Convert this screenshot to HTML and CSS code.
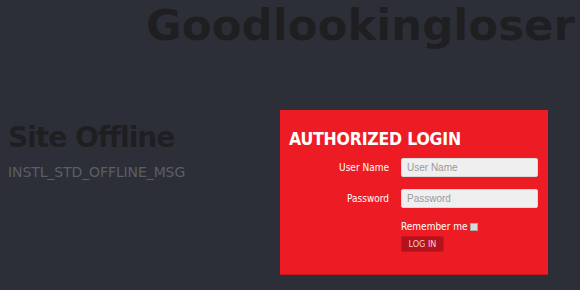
FILE: index.html
```html
<!DOCTYPE html>
<html>
<head>
  <title>Goodlookingloser - Site Offline</title>
  <link rel="stylesheet" href="styles.css">
</head>
<body>

  <h1 class="site-title">Goodlookingloser</h1>

  <div class="main">
    <div class="offline">
      <h2>Site Offline</h2>
      <p>INSTL_STD_OFFLINE_MSG</p>
    </div>

    <form class="login-box" id="loginForm">
      <h3>AUTHORIZED LOGIN</h3>
      <div class="row">
        <label for="username">User Name</label>
        <input type="text" id="username" placeholder="User Name">
      </div>
      <div class="row">
        <label for="passwd">Password</label>
        <input type="password" id="passwd" placeholder="Password">
      </div>
      <div class="row remember">
        <span></span>
        <label for="remember">Remember me <input type="checkbox" id="remember"></label>
      </div>
      <div class="row">
        <span></span>
        <div><button type="submit">LOG IN</button></div>
      </div>
    </form>
  </div>

</body>
</html>
```

FILE: styles.css
```css
body {
  margin: 0;
  background: #2c2f38;
  font-family: "DejaVu Sans", Verdana, sans-serif;
}

.site-title {
  margin: 0;
  padding: 3px 5px 0 0;
  text-align: right;
  font-size: 43.5px;
  line-height: 44px;
  color: #1f1f21;
}

.main {
  display: flex;
  align-items: flex-start;
  padding: 63px 32px 0 8px;
}

.offline h2 {
  margin: 11px 0 0;
  font-size: 28px;
  line-height: 34px;
  letter-spacing: -1px;
  color: #1f1f21;
}

.offline p {
  margin: 9px 0 0;
  font-size: 14px;
  letter-spacing: -0.1px;
  color: #5b5e66;
}

.login-box {
  margin-left: auto;
  width: 250px;
  height: 164px;
  padding: 0 9px;
  background: #ed1c24;
  border-bottom: 1px solid #c8161d;
}

.login-box h3 {
  margin: 18px 0 8px;
  font-family: "DejaVu Sans Condensed", "DejaVu Sans", sans-serif;
  font-size: 17.5px;
  line-height: 22px;
  letter-spacing: -0.2px;
  color: #fff;
}

.row {
  display: grid;
  grid-template-columns: 100px 137px;
  column-gap: 12px;
  align-items: center;
  margin-bottom: 12px;
  font-family: "DejaVu Sans Condensed", "DejaVu Sans", sans-serif;
  font-size: 10px;
  color: #fff;
}

.row > label {
  text-align: right;
}

.row input[type=text],
.row input[type=password] {
  box-sizing: border-box;
  width: 137px;
  height: 19px;
  margin: 0;
  padding: 0 5px;
  background: #efefef;
  border: 1px solid #d9d9d9;
  border-radius: 2px;
  font-family: "Liberation Sans", Arial, sans-serif;
  font-size: 10px;
}

.row input::placeholder {
  color: #9a9a9a;
}

.remember {
  margin: 13px 0 4px;
}

.remember > label {
  text-align: left;
}

.remember input {
  appearance: none;
  box-sizing: border-box;
  width: 8px;
  height: 8px;
  margin: 0;
  vertical-align: -1px;
  background: #d8d8d8;
  border: 1px solid #a9a9a9;
}

button {
  width: 43px;
  height: 16px;
  padding: 0;
  background: #b5121b;
  border: 1px solid #c9161f;
  color: #f4d0d0;
  font-family: "DejaVu Sans Condensed", "DejaVu Sans", sans-serif;
  font-size: 9px;
  cursor: pointer;
}
```
